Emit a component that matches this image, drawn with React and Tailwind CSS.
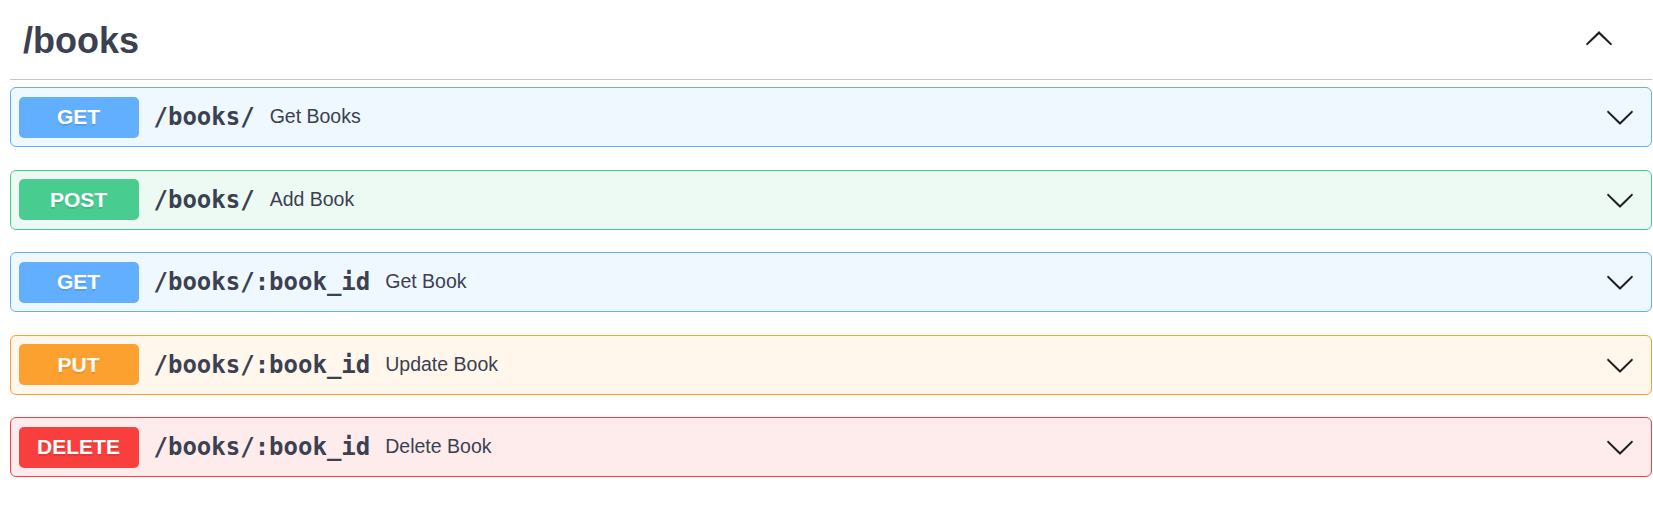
import React from 'react';

const ops = [
  { method: 'GET', path: '/books/', summary: 'Get Books', badge: 'bg-[#61affe]', box: 'bg-[#eff7ff] border-[#61affe]' },
  { method: 'POST', path: '/books/', summary: 'Add Book', badge: 'bg-[#49cc90]', box: 'bg-[#edfaf4] border-[#49cc90]' },
  { method: 'GET', path: '/books/:book_id', summary: 'Get Book', badge: 'bg-[#61affe]', box: 'bg-[#eff7ff] border-[#61affe]' },
  { method: 'PUT', path: '/books/:book_id', summary: 'Update Book', badge: 'bg-[#fca130]', box: 'bg-[#fff6ec] border-[#fca130]' },
  { method: 'DELETE', path: '/books/:book_id', summary: 'Delete Book', badge: 'bg-[#f93e3e]', box: 'bg-[#feecec] border-[#f93e3e]' },
];

const Arrow = ({ up }) => (
  <svg width="30" height="30" viewBox="0 0 20 20" className={up ? 'rotate-180' : ''}>
    <path
      fill="#1f1f1f"
      d="M17.418 6.109c.272-.268.709-.268.979 0s.271.701 0 .969l-7.908 7.83c-.27.268-.707.268-.979 0l-7.908-7.83c-.27-.268-.27-.701 0-.969.271-.268.709-.268.979 0L10 13.25l7.418-7.141z"
    />
  </svg>
);

const OpBlock = ({ op }) => (
  <div className={`h-[60px] mb-[22.5px] border-[1.5px] rounded-[6px] ${op.box} flex items-center pl-[7.5px] pr-[16px]`}>
    <span
      className={`${op.badge} w-[120px] h-[41px] rounded-[5px] flex items-center justify-center text-white font-bold text-[21px] [text-shadow:0_1.5px_0_rgba(0,0,0,0.1)]`}
      style={{ fontFamily: '"Liberation Sans", Arial, sans-serif' }}
    >
      {op.method}
    </span>
    <span
      className="px-[15px] text-[24px] font-bold text-[#3b4151]"
      style={{ fontFamily: '"DejaVu Sans Mono", monospace' }}
    >
      {op.path}
    </span>
    <span
      className="text-[19.5px] text-[#3b4151] flex-1"
      style={{ fontFamily: '"Liberation Sans", Arial, sans-serif' }}
    >
      {op.summary}
    </span>
    <Arrow />
  </div>
);

export default function App() {
  return (
    <div className="w-full h-[525px] bg-white pl-[10px] pr-[1px]">
      <div className="h-[79.5px] flex items-center pl-[13px] pr-[38px] pt-[3px] border-b-[1.5px] border-[#c4c6cb]">
        <h2
          className="flex-1 text-[36px] font-bold text-[#3b4151]"
          style={{ fontFamily: '"Liberation Sans", Arial, sans-serif' }}
        >
          /books
        </h2>
        <div className="-mt-[3px]">
          <Arrow up />
        </div>
      </div>
      <div className="pt-[7.5px]">
        {ops.map((op, i) => (
          <OpBlock key={i} op={op} />
        ))}
      </div>
    </div>
  );
}
